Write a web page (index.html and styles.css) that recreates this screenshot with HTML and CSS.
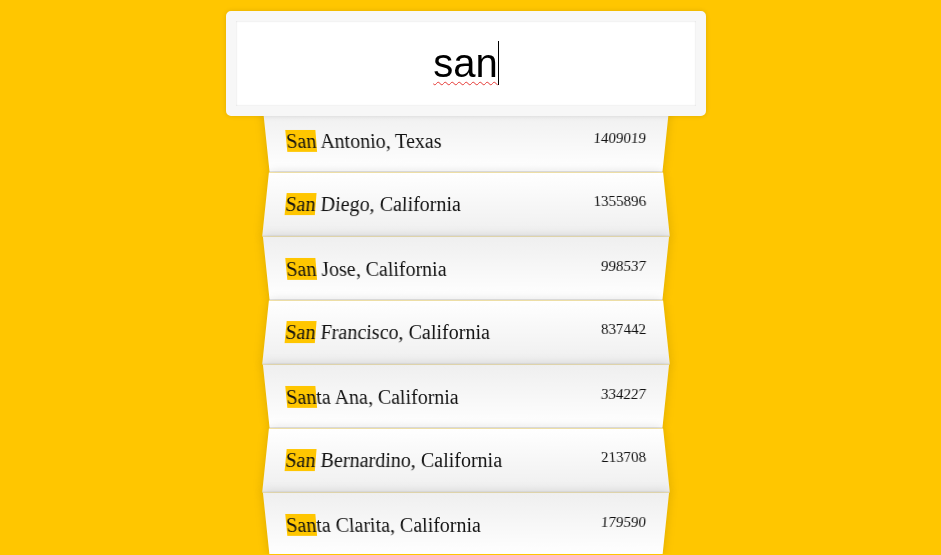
FILE: index.html
```html
<!DOCTYPE html>
<html lang="en">
<head>
<meta charset="utf-8">
<title>Type Ahead</title>
<link rel="stylesheet" href="styles.css">
</head>
<body>
<form class="search-form">
  <div class="search" role="textbox" aria-label="City or State"><span class="typed">san</span><span class="caret"></span></div>
  <ul class="suggestions">
    <li><span class="name"><span class="hl">San</span> Antonio, Texas</span><span class="population">1409019</span></li>
    <li><span class="name"><span class="hl">San</span> Diego, California</span><span class="population">1355896</span></li>
    <li><span class="name"><span class="hl">San</span> Jose, California</span><span class="population">998537</span></li>
    <li><span class="name"><span class="hl">San</span> Francisco, California</span><span class="population">837442</span></li>
    <li><span class="name"><span class="hl">San</span>ta Ana, California</span><span class="population">334227</span></li>
    <li><span class="name"><span class="hl">San</span> Bernardino, California</span><span class="population">213708</span></li>
    <li><span class="name"><span class="hl">San</span>ta Clarita, California</span><span class="population">179590</span></li>
  </ul>
</form>
</body>
</html>
```

FILE: styles.css
```css
html {
  box-sizing: border-box;
  background: #ffc600;
  font-family: "Liberation Serif", "Times New Roman", serif;
  font-size: 20px;
}

*, *::before, *::after {
  box-sizing: inherit;
}

body {
  margin: 0;
  padding: 11px 9px 0 0;
}

.search-form {
  width: 400px;
  margin: 0 auto;
}

.search {
  position: relative;
  z-index: 2;
  margin: 0 -40px -10px;
  padding: 20px;
  border: 10px solid #f7f7f7;
  border-radius: 5px;
  background: #fff;
  text-align: center;
  font-family: "Liberation Sans", Arial, sans-serif;
  font-size: 40px;
  line-height: 45px;
  color: #000;
  box-shadow: 0 0 5px rgba(0, 0, 0, 0.12), inset 0 0 2px rgba(0, 0, 0, 0.19);
}

.typed {
  text-decoration: underline wavy #e53935;
  text-decoration-thickness: 1px;
  text-underline-offset: 4px;
}

.caret {
  display: inline-block;
  width: 1px;
  height: 44px;
  background: #000;
  vertical-align: -8px;
}

.suggestions {
  margin: 0;
  padding: 0;
}

.suggestions li {
  list-style: none;
  margin: 0;
  padding: 21px 20px 19px;
  display: flex;
  justify-content: space-between;
  border-bottom: 1px solid #d8d8d8;
  box-shadow: 0 0 10px rgba(0, 0, 0, 0.14);
  color: #111;
  line-height: 23px;
}

.suggestions li:nth-child(odd) {
  transform: perspective(100px) rotateX(-3deg) translateY(3px);
  background: linear-gradient(to top, #ffffff 0%, #efefef 100%);
}

.suggestions li:nth-child(even) {
  transform: perspective(100px) rotateX(3deg) translateY(2px) scale(1.001);
  background: linear-gradient(to bottom, #ffffff 0%, #efefef 100%);
}

.population {
  font-size: 15px;
  line-height: 17px;
}

.hl {
  background: #ffc600;
}
```
